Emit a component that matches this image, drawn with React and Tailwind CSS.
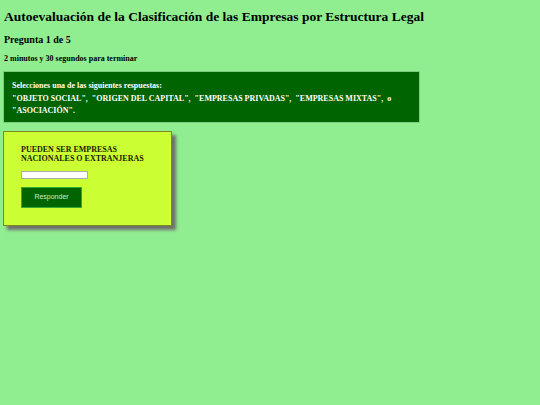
export default function App() {
  return (
    <div className="w-[540px] h-[405px] bg-[#90ee90] text-black overflow-hidden" style={{ fontFamily: '"Liberation Serif", serif' }}>
      <div className="pl-[4px] pt-[8px]">
        <h1 className="text-[13.5px] font-bold leading-[18px] m-0">Autoevaluación de la Clasificación de las Empresas por Estructura Legal</h1>
        <h2 className="text-[10px] font-bold leading-[12px] mt-[8px]">Pregunta 1 de 5</h2>
        <p className="text-[8px] font-bold leading-[10px] mt-[8px]">2 minutos y 30 segundos para terminar</p>
      </div>
      <div className="ml-[3px] mt-[7px] w-[417px] h-[52px] bg-[#006400] border border-[#7ccd7c] pl-[8px] pt-[8px] text-white text-[8px] font-bold leading-[12.5px]">
        <div>Selecciones una de las siguientes respuestas:</div>
        <div>"OBJETO SOCIAL",&nbsp; "ORIGEN DEL CAPITAL",&nbsp; "EMPRESAS PRIVADAS",&nbsp; "EMPRESAS MIXTAS",&nbsp; o</div>
        <div>"ASOCIACIÓN".</div>
      </div>
      <div className="ml-[3px] mt-[8px] w-[169px] h-[95px] bg-[#ccff33] border border-[#7a8a20] shadow-[4px_4px_3px_#707070] pl-[17px] pt-[13px]">
        <div className="text-[8px] font-bold leading-[9px] text-[#1a1a00]">PUEDEN SER EMPRESAS<br />NACIONALES O EXTRANJERAS</div>
        <div className="mt-[8px] w-[67px] h-[8px] bg-white border border-[#aaa]"></div>
        <div className="mt-[8px] w-[61px] h-[21px] bg-[#006400] border border-[#33aa33] flex items-center justify-center text-[7px] text-[#c8f0c8]" style={{ fontFamily: '"Liberation Sans", sans-serif' }}>Responder</div>
      </div>
    </div>
  );
}
